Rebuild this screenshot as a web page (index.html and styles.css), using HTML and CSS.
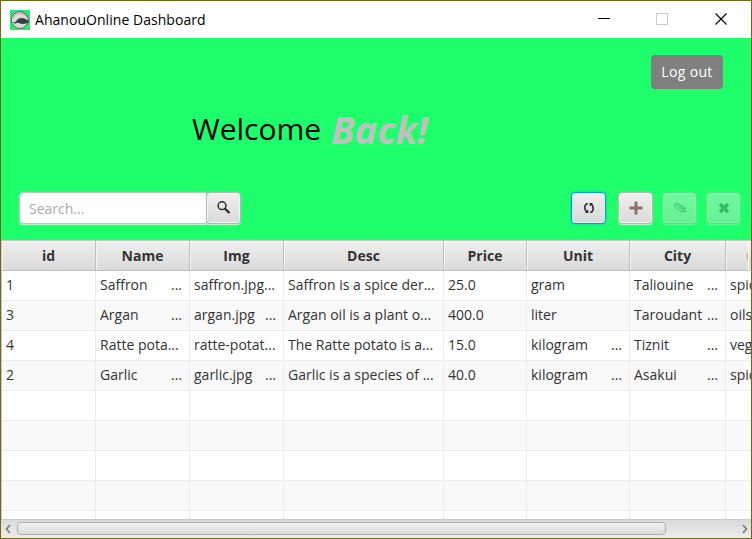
FILE: index.html
```html
<!DOCTYPE html>
<html lang="en">
<head>
<meta charset="utf-8">
<title>AhanouOnline Dashboard</title>
<link rel="stylesheet" href="styles.css">
</head>
<body>
<div class="window">
  <header class="titlebar">
    <svg class="app-icon" width="20" height="20" viewBox="0 0 20 20"><rect width="20" height="20" fill="#2fe873"/><circle cx="9.800" cy="10" r="8.500" fill="#d8dcd9" stroke="#5d6a61" stroke-width="1"/><path d="M3 8q2-5 7-5 5 0 7 4" fill="none" stroke="#8d948f" stroke-width=".8"/><path d="M2.500 12.500C5 13 6 11.500 7 10c2-3 8-3 12.500 2-4 2.500-9 2.500-12 .5-1.500 1.200-3.500 1.200-5 0z" fill="#3a3d3b"/></svg>
    <span class="title">AhanouOnline Dashboard</span>
    <svg class="controls" width="132" height="37" viewBox="0 0 132 37" fill="none" shape-rendering="crispEdges"><path d="M0 17.500h12" stroke="#000"/><rect x="58.500" y="12.500" width="11" height="11" stroke="#ccc"/><path d="M117.500 12.500l11 11m0-11l-11 11" stroke="#000" shape-rendering="auto" stroke-width="1.100"/></svg>
  </header>
  <section class="hero">
    <div class="top"><button class="logout">Log out</button></div>
    <h1 class="welcome"><span class="hello">Welcome</span><em>Back!</em></h1>
    <div class="toolbar">
      <div class="search"><span class="field">Search...</span><button class="btn find"><svg width="16" height="16" viewBox="0 0 16 16" fill="none" stroke="#2b2b2b"><circle cx="6" cy="5.700" r="3.900" stroke-width="1.500"/><path d="M8.800 8.500l4.700 4.500" stroke-width="2.400"/></svg></button></div>
      <div class="actions">
        <button class="btn focus"><svg width="12" height="12" viewBox="0 0 12 12" fill="none" stroke="#2b2b2b" stroke-width="1.500"><path d="M4.800 1.500Q1.800 2 1.800 5.500T4.500 10M7.200 10.500q3-.5 3-4T7.500 2"/><path d="M2.500 10.500h2.300V8M9.500 1.500H7.200V4" stroke-width="1.100"/></svg></button>
        <button class="btn"><svg width="14" height="14" viewBox="0 0 14 14"><path d="M7 .5v13M.5 7h13" stroke="#8a7373" stroke-width="3"/></svg></button>
        <button class="btn disabled"><svg width="14" height="12" viewBox="0 0 14 12" fill="none" stroke="#555"><path d="M1.500 2.500Q2 .8 4 1.200l7 4 1.800 4.500-4.500-.2L2.200 5.300Q1 4 1.500 2.500zM2.800 3.200l7 4.600M4 2l7 4.800M11.500 6.500L9 9.300" stroke-width=".8"/></svg></button>
        <button class="btn disabled"><svg width="12" height="12" viewBox="0 0 12 12"><path d="M2 2l8 8M10 2l-8 8" stroke="#555" stroke-width="3.400"/></svg></button>
      </div>
    </div>
  </section>
  <main class="table">
    <div class="row head"><span>id</span><span>Name</span><span>Img</span><span>Desc</span><span>Price</span><span>Unit</span><span>City</span><span class="last">Category</span></div>
    <div class="row"><span>1</span><span>Saffron<i>...</i></span><span>saffron.jpg...</span><span>Saffron is a spice der...</span><span>25.0</span><span>gram</span><span>Taliouine<i>...</i></span><span>spices</span></div>
    <div class="row"><span>3</span><span>Argan<i>...</i></span><span>argan.jpg<i>...</i></span><span>Argan oil is a plant o...</span><span>400.0</span><span>liter</span><span>Taroudant<i>...</i></span><span>oils</span></div>
    <div class="row"><span>4</span><span>Ratte pota...</span><span>ratte-potat...</span><span>The Ratte potato is a...</span><span>15.0</span><span>kilogram<i>...</i></span><span>Tiznit<i>...</i></span><span>vegetables</span></div>
    <div class="row"><span>2</span><span>Garlic<i>...</i></span><span>garlic.jpg<i>...</i></span><span>Garlic is a species of ...</span><span>40.0</span><span>kilogram<i>...</i></span><span>Asakui<i>...</i></span><span>spices</span></div>
    <div class="row"><span></span><span></span><span></span><span></span><span></span><span></span><span></span><span></span></div>
    <div class="row"><span></span><span></span><span></span><span></span><span></span><span></span><span></span><span></span></div>
    <div class="row"><span></span><span></span><span></span><span></span><span></span><span></span><span></span><span></span></div>
    <div class="row"><span></span><span></span><span></span><span></span><span></span><span></span><span></span><span></span></div>
    <div class="row"><span></span><span></span><span></span><span></span><span></span><span></span><span></span><span></span></div>
  </main>
  <footer class="scroll">
    <svg width="6" height="10" viewBox="0 0 6 10" fill="none" stroke="#777" stroke-width="1.500"><path d="M5 1L1.500 5 5 9"/></svg>
    <div class="track"><div class="thumb"></div></div>
    <svg width="6" height="10" viewBox="0 0 6 10" fill="none" stroke="#777" stroke-width="1.500"><path d="M1 1l3.500 4L1 9"/></svg>
  </footer>
</div>
</body>
</html>
```
FILE: styles.css
```css
* { box-sizing: border-box; }
body { margin: 0; font: 14px/20px "Open Sans", "Noto Sans", sans-serif; color: #333; overflow: hidden; }
button { font: inherit; border: 0; padding: 0; }
.window { width: 752px; height: 539px; border: 1px solid #716817; display: flex; flex-direction: column; overflow: hidden; background: #fff; }
.titlebar { height: 37px; flex: none; display: flex; align-items: center; padding: 0 21px 0 9px; color: #000; }
.title { margin-left: 5px; letter-spacing: 0.04px; }
.controls { margin-left: auto; }
.hero { height: 202px; flex: none; background: #1dff6b; padding: 17px 9px 0 17px; }
.top { display: flex; justify-content: flex-end; padding-right: 19px; }
.logout { width: 72px; height: 34px; border-radius: 4px; background: #808080; color: #fff; letter-spacing: 0.35px; }
.welcome { margin: 15px 0 0 174px; height: 50px; display: flex; align-items: center; font-weight: 400; color: #000; }
.hello { font-size: 30px; width: 139px; white-space: nowrap; }
.welcome em { font-size: 38px; font-weight: 700; color: #c0c0c0; }
.toolbar { display: flex; justify-content: space-between; margin-top: 38px; }
.search { display: flex; padding-left: 1px; }
.field { width: 188px; height: 32px; border: 1px solid #b9c8bd; border-radius: 4px 0 0 4px; background: linear-gradient(#f2f2f2, #fff 5px); box-shadow: 0 1px 1px #c9f5d7; color: #aaa; padding: 6px 9px; }
.btn { width: 35px; height: 32px; border: 1px solid #b5b5b5; border-radius: 4px; background: linear-gradient(#efefef, #d9d9d9); box-shadow: inset 0 0 0 1px #f4f4f4, 0 1px 1px #c9f5d7; display: flex; align-items: center; justify-content: center; }
.find { margin-left: -1px; }
.actions { display: flex; padding-right: 1px; }
.actions .btn + .btn { margin-left: 9px; }
.actions .focus + .btn { margin-left: 12px; }
.actions .focus { border-color: #039ed3; box-shadow: 0 0 2px #03aee0, inset 0 0 0 1px #dff0f6; }
.disabled { opacity: .4; }
.table { height: 279px; flex: none; overflow: hidden; border-top: 1px solid #c8c8c8; border-left: 1px solid #c8c8c8; }
.row { display: grid; grid-template-columns: 94px 94px 94px 160px 83px 103px 96px 96px; height: 30px; }
.row > span { display: flex; justify-content: space-between; padding: 4px 7px 0 4px; border-right: 1px solid #ececec; border-bottom: 1px solid #ececec; white-space: nowrap; overflow: hidden; }
.row:nth-child(odd) { background: #f9f9f9; }
.row i { font-style: normal; }
.row.head { font-weight: 700; background: linear-gradient(#efefef, #d9d9d9); }
.row.head > span { justify-content: center; padding: 5px 0 0; border-color: #c0c0c0; box-shadow: inset 1px 1px #f4f4f4; }
.row.head .last { padding-left: 20px; justify-content: flex-start; color: #c9a888; width: 23px; border-right: 1px solid #fff; }
.scroll { height: 19px; display: flex; align-items: center; padding: 0 3px 0 4px; background: linear-gradient(#dadada, #ececec); border-top: 1px solid #c8c8c8; }
.track { flex: 1; padding-left: 6px; }
.thumb { width: 649px; height: 13px; margin-top: -1px; border: 1px solid #b0b0b0; border-radius: 4px; background: linear-gradient(#f3f3f3, #dcdcdc); }
```
